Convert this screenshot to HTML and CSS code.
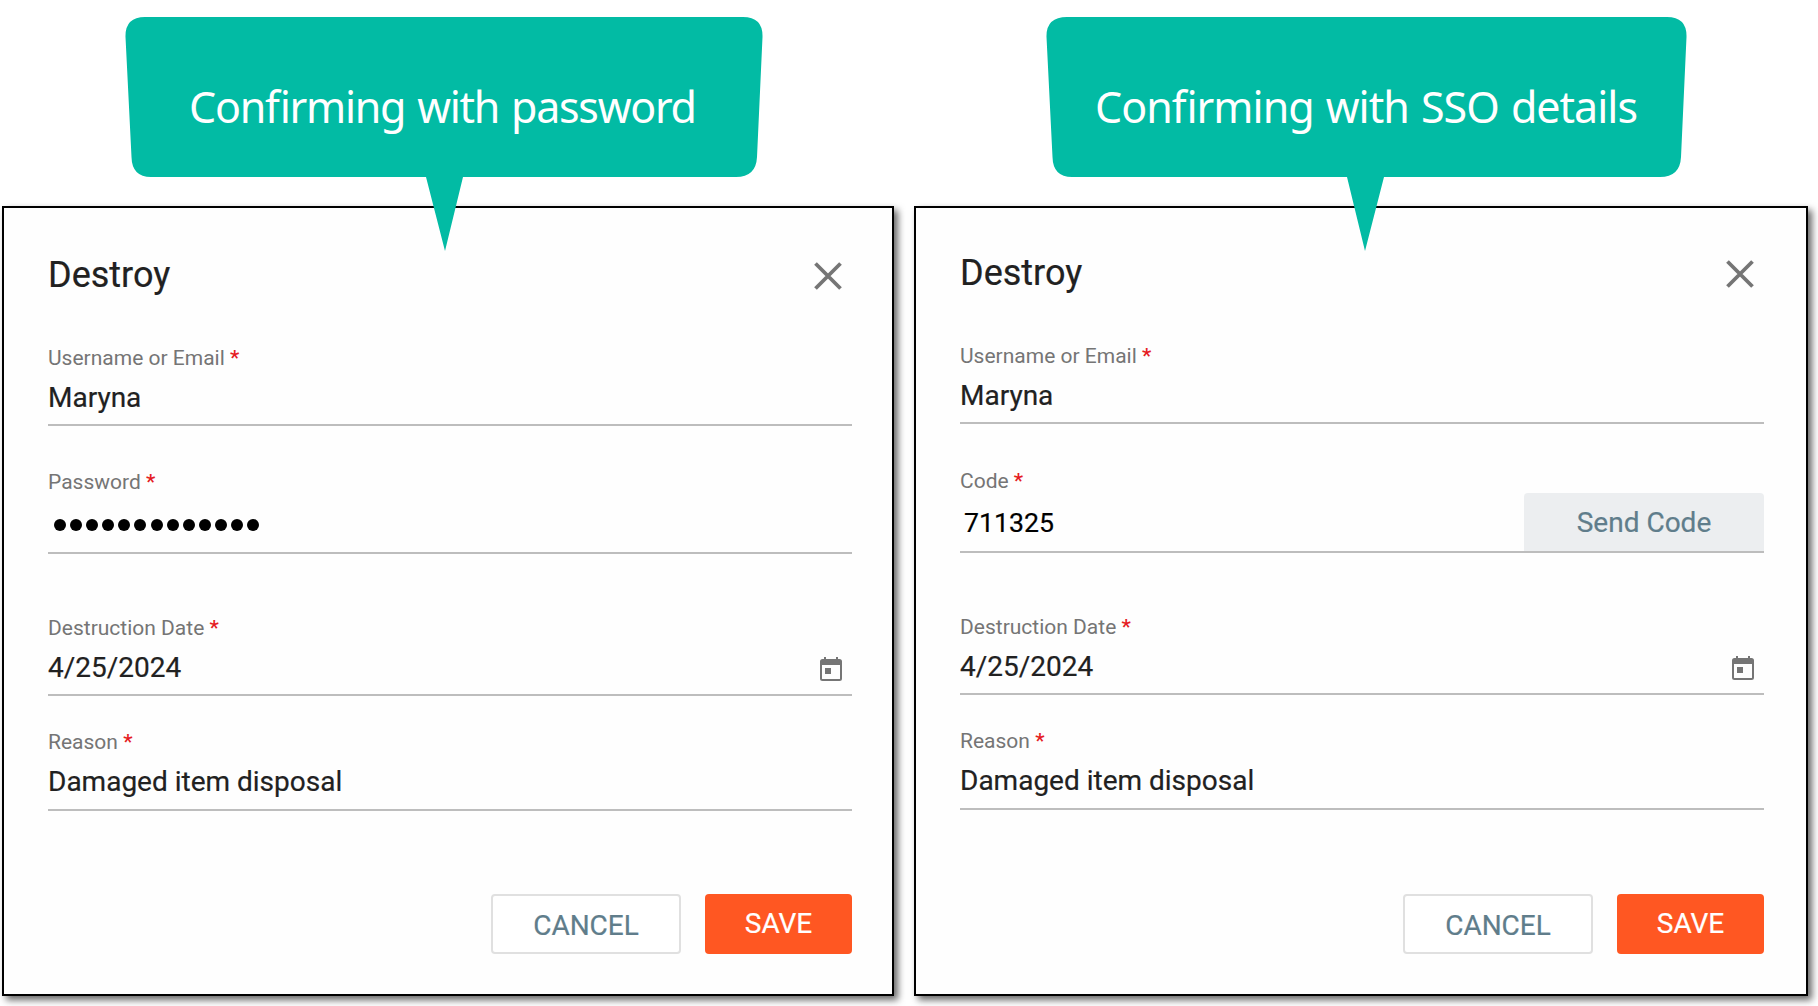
FILE: index.html
```html
<!DOCTYPE html>
<html lang="en">

<head>
  <meta charset="UTF-8">
  <meta name="viewport" content="width=device-width, initial-scale=1.0">
  <title>Destroy</title>
  <link rel="stylesheet" href="styles.css">
</head>

<body>
  <svg class="sprite" width="0" height="0">
    <symbol id="icon-close" viewBox="0 0 28 28">
      <path d="M1.500 1.500L26.500 26.500M26.500 1.500L1.500 26.500" fill="none" stroke="#757575" stroke-width="3.800"/>
    </symbol>
    <symbol id="icon-calendar" viewBox="0 0 22 24">
      <path d="M4 0h2v3h-2zM16 0h2v3h-2z" fill="#757575"/>
      <rect x="1" y="3" width="20" height="20" rx="1.5" fill="none" stroke="#757575" stroke-width="2"/>
      <path d="M1 3h20v5H1z" fill="#757575"/>
      <path d="M5 11h6v6H5z" fill="#757575"/>
    </symbol>
  </svg>

  <div class="column column-password">
    <svg class="callout" width="640" height="251" viewBox="0 0 640 251">
      <path d="M20 17H618Q638 17 637.500 37L632 157Q631 177 611 177H338L320 251L301 177H26Q7 177 6.500 157L0.500 37Q0 17 20 17Z" fill="#02bba4"/>
      <text x="64" y="122.500" textLength="508">Confirming with password</text>
    </svg>

    <div class="dialog">
      <div class="dialog-header">
        <h1>Destroy</h1>
        <svg class="close" width="28" height="28"><use href="#icon-close"/></svg>
      </div>

      <div class="field">
        <label>Username or Email <span>*</span></label>
        <div class="value">Maryna</div>
      </div>

      <div class="field field-secret">
        <label>Password <span>*</span></label>
        <div class="value dots">
          <i></i><i></i><i></i><i></i><i></i><i></i><i></i><i></i><i></i><i></i><i></i><i></i><i></i>
        </div>
      </div>

      <div class="field field-date">
        <label>Destruction Date <span>*</span></label>
        <div class="value">4/25/2024
          <svg class="calendar" width="22" height="24"><use href="#icon-calendar"/></svg>
        </div>
      </div>

      <div class="field field-reason">
        <label>Reason <span>*</span></label>
        <div class="value">Damaged item disposal</div>
      </div>

      <div class="actions">
        <button class="cancel">CANCEL</button>
        <button class="save">SAVE</button>
      </div>
    </div>
  </div>

  <div class="column column-sso">
    <svg class="callout" width="642" height="251" viewBox="0 0 642 251">
      <path d="M21 17H621Q641 17 640.500 37L635 157Q634 177 614 177H338L319 251L301 177H26Q7 177 6.500 157L0.500 37Q0 17 21 17Z" fill="#02bba4"/>
      <text x="49" y="122.500" textLength="543">Confirming with SSO details</text>
    </svg>

    <div class="dialog">
      <div class="dialog-header">
        <h1>Destroy</h1>
        <svg class="close" width="28" height="28"><use href="#icon-close"/></svg>
      </div>

      <div class="field">
        <label>Username or Email <span>*</span></label>
        <div class="value">Maryna</div>
      </div>

      <div class="field field-secret">
        <label>Code <span>*</span></label>
        <div class="value code">711325
          <button class="send">Send Code</button>
        </div>
      </div>

      <div class="field field-date">
        <label>Destruction Date <span>*</span></label>
        <div class="value">4/25/2024
          <svg class="calendar" width="22" height="24"><use href="#icon-calendar"/></svg>
        </div>
      </div>

      <div class="field field-reason">
        <label>Reason <span>*</span></label>
        <div class="value">Damaged item disposal</div>
      </div>

      <div class="actions">
        <button class="cancel">CANCEL</button>
        <button class="save">SAVE</button>
      </div>
    </div>
  </div>
</body>

</html>
```

FILE: styles.css
```css
* {
  box-sizing: border-box;
}

body {
  margin: 0;
  padding-left: 2px;
  height: 1006px;
  display: flex;
  gap: 20px;
  overflow: hidden;
  background-color: #fff;
  font-family: Roboto, Arial, sans-serif;
  color: #212121;
  -webkit-text-stroke-width: 0.2px;
}

.sprite {
  position: absolute;
}

.column {
  width: 892px;
}

.column-sso {
  width: 894px;
}

/* The callout tail hangs over the top of the dialog */
.callout {
  display: block;
  position: relative;
  z-index: 1;
  margin: 0 0 -45px 123px;
}

.column-sso .callout {
  margin-left: 132px;
}

.callout text {
  font-family: "Noto Sans", "Open Sans", sans-serif;
  font-size: 43px;
  word-spacing: 2px;
  fill: #fff;
  -webkit-text-stroke-width: 0;
}

.dialog {
  height: 790px;
  padding: 44px 40px 0 44px;
  border: 2px solid #000;
  background-color: #fefefe;
  box-shadow: 4px 4px 7px rgba(0, 0, 0, 0.6);
}

.column-sso .dialog {
  padding-top: 42px;
  padding-right: 42px;
}

.dialog-header {
  display: flex;
  justify-content: space-between;
  height: 94px;
  padding-right: 10px;
}

.dialog-header h1 {
  margin: 0;
  font-size: 36px;
  font-weight: 400;
  line-height: 47px;
}

.close {
  margin-top: 10px;
}

.field {
  display: flex;
  flex-direction: column;
  height: 80px;
  border-bottom: 2px solid #bdbdbd;
}

.field label {
  font-size: 21px;
  line-height: 24px;
  color: #757575;
  -webkit-text-stroke-width: 0;
}

.field label span {
  color: #e51c23;
  font-weight: 500;
}

.value {
  display: flex;
  justify-content: space-between;
  margin-top: 12px;
  font-size: 28px;
  line-height: 32px;
}

.field-secret {
  height: 84px;
  margin-top: 44px;
}

.column-sso .field-secret {
  margin-top: 45px;
}

.dots {
  justify-content: flex-start;
  gap: 4.1px;
  margin-top: 25px;
  padding-left: 6px;
}

.dots i {
  width: 12px;
  height: 12px;
  border-radius: 50%;
  background-color: #000;
}

.code {
  margin-top: 0;
  padding-left: 4px;
  height: 58px;
  font-size: 26.7px;
  line-height: 61px;
  color: #000;
}

.field-date {
  margin-top: 62px;
}

.calendar {
  margin: 5px 10px 0 0;
}

.field-reason {
  height: 81px;
  margin-top: 34px;
}

.actions {
  display: flex;
  justify-content: flex-end;
  gap: 24px;
  margin-top: 83px;
}

.column-sso .actions {
  margin-top: 84px;
}

button {
  height: 60px;
  padding: 0;
  border: none;
  border-radius: 4px;
  font-family: inherit;
  font-size: 28px;
  -webkit-text-stroke-width: 0.2px;
}

.cancel {
  width: 190px;
  padding-top: 2px;
  border: 2px solid #e0e0e0;
  background-color: #fff;
  color: #607d8b;
}

.save {
  width: 147px;
  padding-bottom: 1px;
  background-color: #ff5722;
  color: #fff;
}

.send {
  width: 240px;
  height: 58px;
  border-radius: 4px 4px 0 0;
  background-color: #eceef0;
  color: #607d8b;
}
```
